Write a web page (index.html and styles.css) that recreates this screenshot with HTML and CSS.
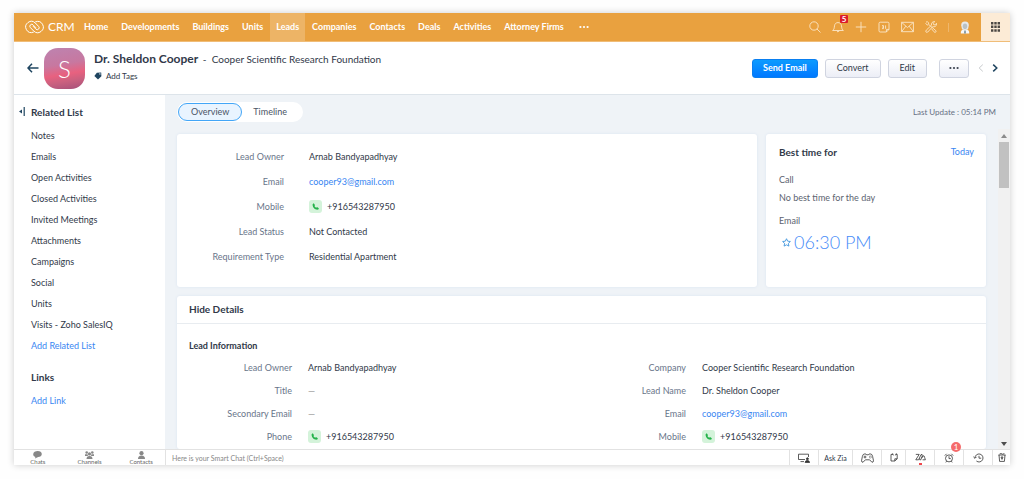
FILE: index.html
```html
<!DOCTYPE html>
<html lang="en">
<head>
    <meta charset="UTF-8">
    <meta name="viewport" content="width=device-width, initial-scale=1.0">
    <title>Dr. Sheldon Cooper - Leads - CRM</title>
    <link rel="stylesheet" href="styles.css">
</head>
<body>
    <svg class="sprite" aria-hidden="true">
        <symbol id="phone" viewBox="0 0 14 14">
            <path d="M4 4.2 5.2 3.6 6.5 5.7 5.8 6.5C6.2 7.4 6.9 8 7.8 8.3L8.6 7.6 10.6 8.8 10.1 10.2C7 11.2 3.2 7.5 4 4.2Z" fill="#25b34b"/>
        </symbol>
    </svg>

    <div class="window">
        <header class="topbar">
            <a href="#" class="logo">
                <svg width="19" height="14" viewBox="0 0 19 14" fill="none" stroke="#fff" stroke-linecap="round">
                    <path d="M8.4 12.2A5.6 5.6 0 1 1 10.3 3L13.6 6.4A1.9 1.9 0 0 1 10.9 9.1L8.2 6.4"/>
                    <path d="M10.6 1.8A5.6 5.6 0 1 1 8.7 11L5.4 7.6A1.9 1.9 0 0 1 8.1 4.9L10.8 7.6"/>
                </svg>
                CRM
            </a>
            <nav class="tabs">
                <a href="#">Home</a>
                <a href="#">Developments</a>
                <a href="#">Buildings</a>
                <a href="#">Units</a>
                <a href="#" class="active">Leads</a>
                <a href="#">Companies</a>
                <a href="#">Contacts</a>
                <a href="#">Deals</a>
                <a href="#">Activities</a>
                <a href="#">Attorney Firms</a>
                <a href="#" class="more" aria-label="More modules"><svg width="10" height="4" viewBox="0 0 10 4" fill="#fff"><circle cx="1.4" cy="2" r="1.1"/><circle cx="5" cy="2" r="1.1"/><circle cx="8.6" cy="2" r="1.1"/></svg></a>
            </nav>
            <div class="tools">
                <button aria-label="Search"><svg width="12" height="12" viewBox="0 0 12 12"><circle cx="5" cy="5" r="4.2"/><path d="M8 8 11.5 11.5"/></svg></button>
                <button aria-label="Notifications"><svg width="12" height="12" viewBox="0 0 12 12"><path d="M.6 9.5C2.2 8.5 2.2 7 2.5 4.8 2.8 2.8 4 1.6 6 1.6S9.2 2.8 9.5 4.8C9.8 7 9.8 8.5 11.4 9.5ZM4.7 9.8Q6 12.4 7.3 9.8"/></svg><span class="count">5</span></button>
                <button aria-label="Create"><svg width="12" height="12" viewBox="0 0 12 12"><path d="M6 .8V11.2M.8 6H11.2"/></svg></button>
                <button aria-label="Calendar"><svg width="12" height="12" viewBox="0 0 12 12"><path d="M2.2 1.2H9.8Q11 1.2 11 2.4V8.4L8.4 11H2.2Q1 11 1 9.8V2.4Q1 1.2 2.2 1.2ZM8.4 11V8.4H11M4 4.6H5.5V7.6H4M4.2 6.1H5.5M7.6 4.4V7.8"/></svg></button>
                <button aria-label="Mail"><svg width="13" height="12" viewBox="0 0 13 12"><path d="M.6 1.3H12.4V10.7H.6ZM.6 1.3 6.5 6.6 12.4 1.3M.6 10.7 4.8 5.2M12.4 10.7 8.2 5.2"/></svg></button>
                <button aria-label="Setup"><svg width="12" height="12" viewBox="0 0 12 12"><path d="M1 1.2 2.4.6 3.6 2V3.4L10.8 9.6Q11.4 10.6 10.6 11.2 9.8 11.6 9 10.8L6.6 7.8M3.2 4.2 1.6 3.6.6 2.2M9.8.6 8.2 2.2 8.6 3.6 10 3.9 11.5 2.3Q11.9 4.8 10 5.6 8.6 6 7.8 5.5L2.8 11Q1.6 11.8.9 10.9.5 10 1.3 9.1L6.5 4.2Q6.1 2.8 7 1.6 8 .4 9.8.6Z"/></svg></button>
                <span class="divider"></span>
                <a href="#" class="avatar" aria-label="My profile">
                    <svg width="10" height="13" viewBox="0 0 10 13"><path d="M.8 12.4Q.6 9 3.2 8.6H6.8Q9.4 9 9.2 12.4Z" fill="#f6f8fa"/><path d="M1.2 4.6Q1 .4 5 .4T8.8 4.6L8 8.2Q5 9.8 2 8.2Z" fill="#e6e9ea"/><ellipse cx="5" cy="5.3" rx="2.2" ry="2.8" fill="#b9c1c4"/><path d="M4.2 9.4H5.8L6 12.4H4Z" fill="#8397a0"/></svg>
                </a>
            </div>
            <button class="apps" aria-label="All apps">
                <svg width="9" height="10" viewBox="0 0 9 10" fill="#4c4844"><path d="M0 0H2.4V2.5H0ZM3.3 0H5.7V2.5H3.3ZM6.6 0H9V2.5H6.6ZM0 3.6H2.4V6.1H0ZM3.3 3.6H5.7V6.1H3.3ZM6.6 3.6H9V6.1H6.6ZM0 7.2H2.4V9.7H0ZM3.3 7.2H5.7V9.7H3.3ZM6.6 7.2H9V9.7H6.6Z"/></svg>
            </button>
        </header>

        <section class="record">
            <a href="#" class="back" aria-label="Back"><svg width="12" height="10" viewBox="0 0 12 10" fill="none" stroke="#1f4560" stroke-width="1.5"><path d="M5 .8 1 5 5 9.2M1 5H11.5"/></svg></a>
            <div class="photo">S</div>
            <div class="who">
                <h1>Dr. Sheldon Cooper <span>- &nbsp;Cooper Scientific Research Foundation</span></h1>
                <a href="#" class="tags"><svg width="8" height="8" viewBox="0 0 8 8"><path d="M2.8.8 7.2.4 7.4 4.2 4 7.6.4 4Z" fill="#1f4560"/><circle cx="5.9" cy="1.9" r=".7" fill="#fff"/></svg>Add Tags</a>
            </div>
            <div class="actions">
                <button class="btn primary">Send Email</button>
                <button class="btn">Convert</button>
                <button class="btn">Edit</button>
                <button class="btn dots" aria-label="More actions"><svg width="10" height="4" viewBox="0 0 10 4" fill="#3d4450"><circle cx="1.4" cy="2" r="1.1"/><circle cx="5" cy="2" r="1.1"/><circle cx="8.6" cy="2" r="1.1"/></svg></button>
                <button class="step" aria-label="Previous record"><svg width="6" height="8" viewBox="0 0 6 8" stroke="#c6c9cc"><path d="M4.8.6 1.2 4 4.8 7.4"/></svg></button>
                <button class="step" aria-label="Next record"><svg width="6" height="8" viewBox="0 0 6 8" stroke="#1f4560" stroke-width="1.5"><path d="M1.2.6 4.8 4 1.2 7.4"/></svg></button>
            </div>
        </section>

        <div class="main">
            <aside class="sidebar">
                <button class="collapse" aria-label="Collapse related list"><svg width="6" height="9" viewBox="0 0 6 9" fill="#1f4560"><path d="M0 4.5 3 2.5V6.5ZM4.6 0H5.8V9H4.6Z"/></svg></button>
                <h2>Related List</h2>
                <ul>
                    <li><a href="#">Notes</a></li>
                    <li><a href="#">Emails</a></li>
                    <li><a href="#">Open Activities</a></li>
                    <li><a href="#">Closed Activities</a></li>
                    <li><a href="#">Invited Meetings</a></li>
                    <li><a href="#">Attachments</a></li>
                    <li><a href="#">Campaigns</a></li>
                    <li><a href="#">Social</a></li>
                    <li><a href="#">Units</a></li>
                    <li><a href="#">Visits - Zoho SalesIQ</a></li>
                    <li><a href="#" class="link">Add Related List</a></li>
                </ul>
                <h2>Links</h2>
                <ul>
                    <li><a href="#" class="link">Add Link</a></li>
                </ul>
            </aside>

            <div class="content">
                <div class="viewbar">
                    <div class="switch">
                        <button class="on">Overview</button>
                        <button>Timeline</button>
                    </div>
                    <span class="updated">Last Update : 05:14 PM</span>
                </div>
                <div class="scroller">
                    <div class="cards">
                        <div class="card summary">
                            <dl class="fields">
                                <dt>Lead Owner</dt><dd>Arnab Bandyapadhyay</dd>
                                <dt>Email</dt><dd><a href="#" class="link">cooper93@gmail.com</a></dd>
                                <dt>Mobile</dt><dd><svg class="call"><use href="#phone"/></svg>+916543287950</dd>
                                <dt>Lead Status</dt><dd>Not Contacted</dd>
                                <dt>Requirement Type</dt><dd>Residential Apartment</dd>
                            </dl>
                        </div>
                        <div class="card best">
                            <div class="best-head">
                                <h3>Best time for</h3>
                                <a href="#" class="link">Today</a>
                            </div>
                            <p class="label">Call</p>
                            <p class="none">No best time for the day</p>
                            <p class="label">Email</p>
                            <p class="time"><svg width="9" height="9" viewBox="0 0 10 10" fill="none" stroke="#3d94dc"><path d="M5 .8 6.3 3.5 9.3 3.9 7.1 6 7.7 9 5 7.6 2.3 9 2.9 6 .7 3.9 3.7 3.5Z"/></svg>06:30 PM</p>
                        </div>
                        <div class="card details">
                            <h3>Hide Details</h3>
                            <h4>Lead Information</h4>
                            <div class="columns">
                                <dl class="fields">
                                    <dt>Lead Owner</dt><dd>Arnab Bandyapadhyay</dd>
                                    <dt>Title</dt><dd class="empty">—</dd>
                                    <dt>Secondary Email</dt><dd class="empty">—</dd>
                                    <dt>Phone</dt><dd><svg class="call"><use href="#phone"/></svg>+916543287950</dd>
                                </dl>
                                <dl class="fields">
                                    <dt>Company</dt><dd>Cooper Scientific Research Foundation</dd>
                                    <dt>Lead Name</dt><dd>Dr. Sheldon Cooper</dd>
                                    <dt>Email</dt><dd><a href="#" class="link">cooper93@gmail.com</a></dd>
                                    <dt>Mobile</dt><dd><svg class="call"><use href="#phone"/></svg>+916543287950</dd>
                                </dl>
                            </div>
                        </div>
                    </div>
                    <div class="scrollbar">
                        <svg width="6" height="4" viewBox="0 0 6 4" fill="#8b8b8b"><path d="M0 4 3 0 6 4Z"/></svg>
                        <span class="thumb"></span>
                        <svg width="6" height="4" viewBox="0 0 6 4" fill="#4e4e4e"><path d="M0 0H6L3 4Z"/></svg>
                    </div>
                </div>
            </div>
        </div>

        <footer class="dock">
            <nav class="chatnav">
                <a href="#"><svg width="9" height="8" viewBox="0 0 9 8"><path d="M4.8 0C7 0 8.8 1.3 8.8 3S7.2 6 5.2 6.1L2 7.6 2.4 6C1 5.4.2 4.6.2 3.2.3 1.2 2.4 0 4.8 0Z"/></svg>Chats</a>
                <a href="#"><svg width="9" height="8" viewBox="0 0 9 8"><circle cx="1.7" cy="1.5" r="1.3"/><circle cx="7.3" cy="1.5" r="1.3"/><circle cx="4.5" cy="2.9" r="1.6"/><path d="M0 5V3.2H2.6L3 5ZM9 5V3.2H6.4L6 5ZM1.5 8Q1.5 5 4.5 5T7.5 8Z"/></svg>Channels</a>
                <a href="#"><svg width="9" height="8" viewBox="0 0 9 8"><circle cx="4.5" cy="2.2" r="2.1"/><path d="M1 8Q1 4.4 4.5 4.4T8 8Z"/></svg>Contacts</a>
            </nav>
            <input type="text" class="smartchat" placeholder="Here is your Smart Chat (Ctrl+Space)" aria-label="Smart Chat">
            <div class="dock-tools">
                <button class="w29" aria-label="Screen share"><svg width="12" height="10" viewBox="0 0 12 10"><path d="M7 6.5H.5V1.2H10.5V4M2.5 8.6H6"/><path d="M7.2 9.6Q7.2 7.4 9.3 7.4T11.6 9.6Z" fill="#333"/><circle cx="9.4" cy="5.8" r="1" fill="#333"/></svg></button>
                <button class="w34">Ask Zia</button>
                <button class="w29" aria-label="Games"><svg width="13" height="10" viewBox="0 0 13 10"><path d="M3.2 1H5L5.6 1.8H7.4L8 1H9.8Q11 1 11.6 3.4L12.5 7.8Q12.3 9.6 10.9 9.2L8.6 6.8H4.4L2.1 9.2Q.7 9.6.5 7.8L1.4 3.4Q2 1 3.2 1ZM4 2.6V5.4M2.6 4H5.4M9.2 2.6V3.6M9.2 4.6V5.4M8 4H8.8M10 4H10.8"/></svg></button>
                <button class="w24" aria-label="Notes"><svg width="8" height="9" viewBox="0 0 8 9"><path d="M3 1.4H1V8H4.8L7.2 5.8V1.4H5.8M4.8 8V5.8H7.2M2.6.4 3.4 2.4M5.4 2.4 6.4.4"/></svg></button>
                <button class="w29 live" aria-label="Zia voice"><svg width="11" height="9" viewBox="0 0 11 9"><path d="M.8 1.4H4.2L.8 6.8H3.6L6 1.6Q7.6.6 7.2 3.2L5.8 6.8Q4.4 7.6 4.6 5.4M6.8 5 8 2.8Q9.4 2.4 9.6 4.4L10.4 6.8H7.6"/></svg></button>
                <button class="w29" aria-label="Reminders"><svg width="10" height="10" viewBox="0 0 10 10"><circle cx="5" cy="5.4" r="3.5"/><path d="M5 3.2V5.6H6.8M.8 2.6 2.6.8M9.2 2.6 7.4.8M2.6 8.2 1.8 9.4M7.4 8.2 8.2 9.4"/></svg><span class="alert">1</span></button>
                <button class="w29" aria-label="History"><svg width="11" height="10" viewBox="0 0 11 10"><path d="M2 5A4 4 0 1 1 3.4 8M.4 3.8 2 5.4 3.6 3.8M6 2.8V5.2H8.2"/></svg></button>
                <button class="w18" aria-label="Recycle bin"><svg width="8" height="9" viewBox="0 0 8 9"><path d="M.4 2H7.6M1 2 1.6 8.4H6.4L7 2M1.6 1 3 .5 4.5 1.2 6.4.6M3 4H5L4 6.4Z"/></svg></button>
            </div>
        </footer>
    </div>
</body>
</html>
```
FILE: styles.css
```css
* {
    box-sizing: border-box;
}
body {
    margin: 0;
    height: 100vh;
    padding: 13px 14px 14px;
    background-color: #fefefe;
    font-family: Lato, sans-serif;
    font-size: 9px;
    line-height: 12px;
    color: #313949;
}
h1, h2, h3, h4, p, ul, dl, dd {
    margin: 0;
    padding: 0;
}
a {
    color: inherit;
    text-decoration: none;
}
button {
    font: inherit;
    color: inherit;
    background: none;
    border: 0;
    padding: 0;
    cursor: pointer;
}
svg {
    display: block;
    flex: none;
}
.sprite {
    position: absolute;
    width: 0;
    height: 0;
}
.link {
    color: #3886f2;
}
.window {
    height: 100%;
    display: flex;
    flex-direction: column;
    background-color: #fff;
    box-shadow: 0 0 7px rgba(0, 0, 0, 0.2);
}

/* top bar */
.topbar {
    flex: none;
    height: 29px;
    display: flex;
    align-items: stretch;
    background-color: #e9a13f;
    border-bottom: 1px solid #f0bd78;
    color: #fff;
}
.logo {
    display: flex;
    align-items: center;
    gap: 4px;
    width: 64px;
    padding-left: 11px;
    font-size: 12px;
}
.tabs {
    display: flex;
    gap: 1px;
    font-weight: bold;
}
.tabs a {
    display: flex;
    align-items: center;
    padding: 0 6px;
}
.tabs .active {
    background-color: #edb466;
}
.tabs .more {
    padding-left: 8px;
}
.tools {
    margin-left: auto;
    display: flex;
    align-items: center;
    gap: 11px;
    padding-right: 11px;
}
.tools button {
    position: relative;
}
.tools button svg {
    fill: none;
    stroke: #fbe6c8;
    stroke-width: 0.9;
}
.count {
    position: absolute;
    top: -6px;
    right: -4px;
    width: 8px;
    height: 8px;
    border-radius: 1px;
    background-color: #dc1b2b;
    font-size: 8px;
    line-height: 8px;
    font-weight: bold;
}
.divider {
    width: 1px;
    height: 9px;
    background-color: #efb76c;
}
.apps {
    width: 29px;
    display: flex;
    align-items: center;
    justify-content: center;
    background-color: #fcebd6;
}

/* record header */
.record {
    flex: none;
    height: 53px;
    display: flex;
    align-items: center;
    padding: 0 12px 0 13px;
    border-bottom: 1px solid #dde4ea;
}
.photo {
    width: 41px;
    height: 41px;
    margin: 0 9px 0 5px;
    border-radius: 14px;
    background: linear-gradient(170deg, #bd83b0 0%, #c778a0 40%, #e8617f 62%, #c9607f 78%, #a4507a 100%);
    color: #fff;
    font-size: 24px;
    font-weight: 300;
    line-height: 42px;
    text-align: center;
}
.who {
    padding-bottom: 4px;
}
.who h1 {
    font-size: 12px;
    line-height: 16px;
}
.who h1 span {
    margin-left: 2px;
    font-size: 10px;
    font-weight: normal;
}
.tags {
    display: flex;
    align-items: center;
    gap: 4px;
    margin-top: 3px;
    font-size: 8px;
}
.actions {
    margin-left: auto;
    display: flex;
    align-items: center;
    gap: 7px;
}
.btn {
    height: 19px;
    padding: 0 11px;
    border: 1px solid #d0d4e0;
    border-radius: 3px;
    background: linear-gradient(#fff, #eceef6);
}
.btn.primary {
    padding: 0 10px;
    border-color: #0a7ff0;
    background: linear-gradient(#0c9bff, #0078ff);
    color: #fff;
    font-weight: bold;
}
.btn.dots {
    padding: 0 9px;
    margin: 0 2px 0 5px;
}
.step svg {
    fill: none;
}
.step:last-child {
    margin-left: 1px;
}

/* body */
.main {
    flex: 1;
    min-height: 0;
    display: flex;
    overflow: hidden;
}
.sidebar {
    position: relative;
    flex: none;
    width: 151px;
    padding: 9px 0 0 17px;
}
.collapse {
    position: absolute;
    left: 5px;
    top: 12px;
}
.sidebar h2 {
    font-size: 10px;
    line-height: 16px;
}
.sidebar ul {
    list-style: none;
    margin: 5px 0 13px;
}
.sidebar li {
    line-height: 21px;
}
.content {
    flex: 1;
    min-width: 0;
    display: flex;
    flex-direction: column;
    background-color: #eff3f7;
}
.viewbar {
    flex: none;
    height: 34px;
    display: flex;
    align-items: center;
    justify-content: space-between;
    padding: 0 14px 0 12px;
}
.switch {
    display: flex;
    height: 20px;
    padding: 1px;
    border-radius: 10px;
    background-color: #fff;
}
.switch button {
    padding: 0 15px 0 11px;
    border-radius: 9px;
    color: #4a5365;
}
.switch .on {
    padding: 0 12px;
    border: 1px solid #43a6f7;
    background-color: #e9f4ff;
}
.updated {
    font-size: 8px;
    color: #667084;
}
.scroller {
    flex: 1;
    min-height: 0;
    display: flex;
    overflow: hidden;
}
.cards {
    flex: 1;
    display: grid;
    grid-template-columns: 1fr 220px;
    grid-template-rows: 153px auto;
    gap: 9px;
    padding: 5px 12px 0;
}
.card {
    border-radius: 3px;
    background-color: #fff;
    box-shadow: 0 0 3px #dbe5f0;
}
.fields {
    display: grid;
    grid-template-columns: 107px 1fr;
    column-gap: 25px;
    align-content: start;
}
.fields dt {
    text-align: right;
    color: #69758a;
}
.fields dd {
    display: flex;
    align-items: center;
}
.call {
    width: 13px;
    height: 13px;
    margin-right: 5px;
    border-radius: 3px;
    background-color: #d4f3da;
}
.empty {
    color: #999;
}
.summary {
    padding-top: 10px;
}
.summary .fields {
    line-height: 25px;
}
.best {
    padding: 10px 12px 0 13px;
}
.best h3,
.details h3 {
    font-size: 10px;
}
.best-head {
    display: flex;
    justify-content: space-between;
    align-items: center;
    height: 16px;
    margin-bottom: 14px;
}
.label,
.none {
    color: #5c6370;
}
.none {
    margin: 6px 0 11px;
}
.time {
    display: flex;
    align-items: center;
    gap: 3px;
    padding-left: 3px;
    font-size: 18px;
    font-weight: 300;
    line-height: 30px;
    color: #468cf8;
}
.details {
    grid-column: 1 / -1;
}
.details h3 {
    padding: 0 12px;
    line-height: 27px;
    border-bottom: 1px solid #e8ecf0;
}
.details h4 {
    padding: 16px 12px 4px;
    font-size: 9px;
}
.columns {
    display: grid;
    grid-template-columns: 394px 1fr;
}
.columns .fields {
    grid-template-columns: 115px 1fr;
    column-gap: 16px;
    line-height: 23px;
}
.scrollbar {
    flex: none;
    width: 12px;
    display: flex;
    flex-direction: column;
    align-items: center;
    padding: 5px 0 3px;
    background-color: #f1f1f1;
}
.thumb {
    width: 10px;
    height: 46px;
    margin: 4px 0 auto;
    background-color: #c1c1c1;
}

/* bottom dock */
.dock {
    flex: none;
    height: 16px;
    display: flex;
    border-top: 1px solid #e2e2e2;
}
.chatnav {
    flex: none;
    width: 152px;
    display: flex;
    gap: 4px;
    border-right: 1px solid #e2e2e2;
    font-size: 6px;
    line-height: 6px;
    color: #666;
}
.chatnav a {
    display: flex;
    flex-direction: column;
    align-items: center;
    width: 48px;
    padding-top: 1px;
}
.chatnav svg {
    fill: #888;
}
.smartchat {
    flex: 1;
    min-width: 0;
    padding: 0 6px;
    border: 0;
    font: inherit;
    font-size: 7px;
}
.smartchat::placeholder {
    color: #888;
}
.dock-tools {
    display: flex;
}
.dock-tools button {
    position: relative;
    display: flex;
    align-items: center;
    justify-content: center;
    border-left: 1px solid #e2e2e2;
    font-size: 7px;
}
.dock-tools svg {
    fill: none;
    stroke: #333;
    stroke-width: 0.8;
}
.w18 { width: 18px; }
.w24 { width: 24px; }
.w29 { width: 29px; }
.w34 { width: 34px; }
.live::after {
    content: "";
    position: absolute;
    bottom: 0;
    width: 3px;
    height: 2px;
    background-color: #f0474c;
}
.alert {
    position: absolute;
    top: -8px;
    right: 2px;
    width: 10px;
    height: 10px;
    border-radius: 50%;
    background-color: #f56b6b;
    color: #fff;
    font-size: 8px;
    line-height: 10px;
}
```
